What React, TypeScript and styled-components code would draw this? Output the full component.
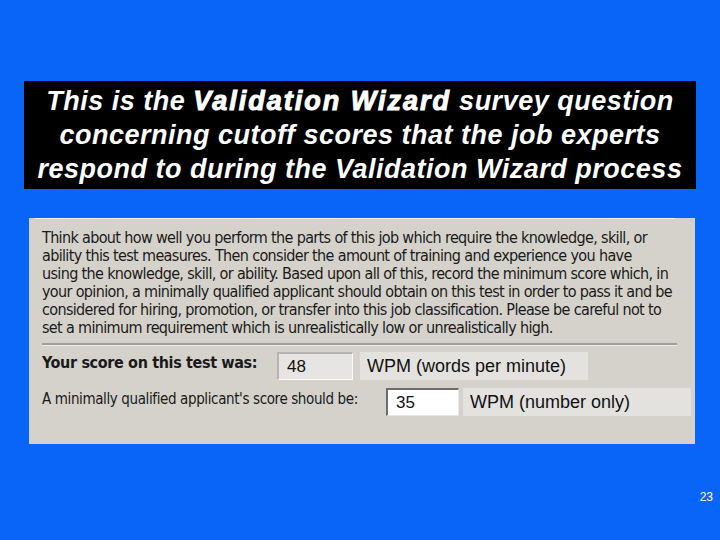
import React from "react";
import styled, {createGlobalStyle} from "styled-components";

const GlobalStyle = createGlobalStyle`
    html, body {
        margin: 0;
        padding: 0;
        background: #0865f8;
    }
`;

const StyledSlide = styled.div`
    background: #0865f8;
    box-sizing: border-box;
    display: flex;
    flex-direction: column;
    height: 540px;
    padding: 81px 0 0 24px;
    width: 720px;
`;

const StyledTitle = styled.h1`
    background: #000;
    box-sizing: border-box;
    color: #fff;
    font-family: "Liberation Sans", Arial, sans-serif;
    font-size: 27px;
    font-style: italic;
    font-weight: 700;
    height: 108px;
    letter-spacing: 0.5px;
    line-height: 34px;
    margin: 0;
    padding-top: 3px;
    text-align: center;
    white-space: nowrap;
    width: 672px;
`;

const StyledWizardName = styled.span`
    -webkit-text-stroke: 1px #fff;
    letter-spacing: 2px;
`;

const StyledPanel = styled.section`
    background: #d5d2cb;
    box-sizing: border-box;
    display: flex;
    flex-direction: column;
    height: 226px;
    margin: 29px 0 0 5px;
    width: 666px;
`;

const StyledPanelEdge = styled.div`
    background: #f4f3f0;
    height: 1px;
    margin: 0 20px 0 6px;
`;

const StyledInstructions = styled.p`
    color: #1a1a1a;
    font-family: "DejaVu Sans", "Liberation Sans", sans-serif;
    font-size: 16px;
    font-stretch: condensed;
    letter-spacing: -0.65px;
    line-height: 17.9px;
    margin: 10px 0 0 13px;
    white-space: nowrap;
`;

const StyledSeparator = styled.div`
    background: #a19f9a;
    border-bottom: 1px solid #ecebe8;
    height: 2px;
    margin: 7px 18px 0 13px;
`;

const StyledRow = styled.div<{$top: number}>`
    align-items: stretch;
    display: flex;
    margin: ${(p) => p.$top}px 0 0 13px;
`;

const StyledLabel = styled.div<{$width: number; $bold?: boolean}>`
    color: #1a1a1a;
    font-family: "DejaVu Sans", "Liberation Sans", sans-serif;
    font-size: ${(p) => (p.$bold ? 16 : 15)}px;
    font-stretch: condensed;
    font-weight: ${(p) => (p.$bold ? 700 : 400)};
    letter-spacing: ${(p) => (p.$bold ? -0.36 : -0.38)}px;
    padding-top: ${(p) => (p.$bold ? 1 : 2)}px;
    white-space: nowrap;
    width: ${(p) => p.$width}px;
`;

const StyledField = styled.div<{$readOnly?: boolean}>`
    background: ${(p) => (p.$readOnly ? "#e6e5e3" : "#fff")};
    border-bottom: 1px solid ${(p) => (p.$readOnly ? "#fafafa" : "#e8e8e8")};
    border-left: 2px solid ${(p) => (p.$readOnly ? "#b6b4b0" : "#6e6d6a")};
    border-right: 1px solid ${(p) => (p.$readOnly ? "#fafafa" : "#e8e8e8")};
    border-top: 2px solid ${(p) => (p.$readOnly ? "#b6b4b0" : "#6e6d6a")};
    box-sizing: border-box;
    color: #111;
    font-family: "Liberation Sans", Arial, sans-serif;
    font-size: 17px;
    height: 28px;
    line-height: 25px;
    padding-left: 8px;
    width: ${(p) => (p.$readOnly ? 76 : 73)}px;
`;

const StyledUnit = styled.div<{$gap: number}>`
    background: #e3e2df;
    box-sizing: border-box;
    color: #111;
    font-family: "Liberation Sans", Arial, sans-serif;
    font-size: 18px;
    line-height: 28px;
    margin-left: ${(p) => p.$gap}px;
    padding-left: 7px;
    width: 228px;
`;

const StyledFooter = styled.footer`
    color: #fff;
    display: flex;
    font-family: "Liberation Sans", Arial, sans-serif;
    font-size: 12px;
    justify-content: flex-end;
    margin-top: 46px;
    padding-right: 7px;
`;

const instructions = [
    "Think about how well you perform the parts of this job which require the knowledge, skill, or",
    "ability this test measures. Then consider the amount of training and experience you have",
    "using the knowledge, skill, or ability. Based upon all of this, record the minimum score which, in",
    "your opinion, a minimally qualified applicant should obtain on this test in order to pass it and be",
    "considered for hiring, promotion, or transfer into this job classification. Please be careful not to",
    "set a minimum requirement which is unrealistically low or unrealistically high.",
];

export default function App() {
    return (
        <>
            <GlobalStyle />
            <StyledSlide>
                <StyledTitle>
                    This is the <StyledWizardName>Validation Wizard</StyledWizardName> survey question
                    <br />
                    concerning cutoff scores that the job experts
                    <br />
                    respond to during the Validation Wizard process
                </StyledTitle>
                <StyledPanel>
                    <StyledPanelEdge />
                    <StyledInstructions>
                        {instructions.map((line, i) => (
                            <React.Fragment key={i}>
                                {line}
                                {i < instructions.length - 1 && <br />}
                            </React.Fragment>
                        ))}
                    </StyledInstructions>
                    <StyledSeparator />
                    <StyledRow $top={6}>
                        <StyledLabel $width={235} $bold>
                            Your score on this test was:
                        </StyledLabel>
                        <StyledField $readOnly>48</StyledField>
                        <StyledUnit $gap={7}>WPM (words per minute)</StyledUnit>
                    </StyledRow>
                    <StyledRow $top={8}>
                        <StyledLabel $width={344}>
                            A minimally qualified applicant's score should be:
                        </StyledLabel>
                        <StyledField>35</StyledField>
                        <StyledUnit $gap={4}>WPM (number only)</StyledUnit>
                    </StyledRow>
                </StyledPanel>
                <StyledFooter>23</StyledFooter>
            </StyledSlide>
        </>
    );
}
